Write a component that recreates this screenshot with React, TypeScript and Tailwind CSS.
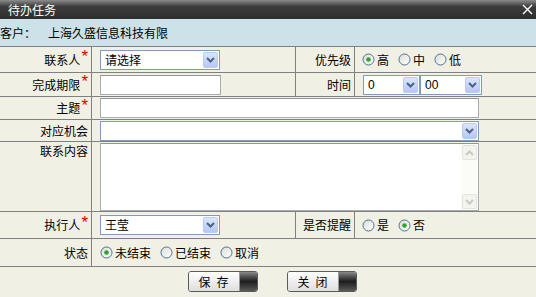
import React from 'react';

const Chevron = ({ color = '#4d6185' }: { color?: string }) => (
  <svg width="9" height="6" viewBox="0 0 9 6">
    <path d="M1 1l3.5 3.5L8 1" fill="none" stroke={color} strokeWidth="2" />
  </svg>
);

const Select = ({ value, className = '' }: { value?: string; className?: string }) => (
  <div className={`flex h-[20px] items-stretch border border-[#7f9db9] bg-white ${className}`}>
    <span className="flex-1 pl-[4px] leading-[18px]">{value}</span>
    <span className="m-px flex w-[15px] items-center justify-center rounded-[2px] border border-[#b9cbf3] bg-gradient-to-b from-[#dce6fd] to-[#b3c8f6]">
      <Chevron />
    </span>
  </div>
);

const Input = ({ className = '' }: { className?: string }) => (
  <div className={`h-[20px] border border-[#a5acb2] border-t-[#8e959b] bg-white ${className}`} />
);

const Radio = ({ checked }: { checked?: boolean }) => (
  <svg width="13" height="13" viewBox="0 0 13 13" className="shrink-0">
    <defs>
      <linearGradient id="rb" x1="0" y1="0" x2="1" y2="1">
        <stop offset="0" stopColor="#dcdcd6" />
        <stop offset="1" stopColor="#ffffff" />
      </linearGradient>
    </defs>
    <circle cx="6.5" cy="6.5" r="5.5" fill="url(#rb)" stroke="#4f6f93" />
    {checked && <circle cx="6.5" cy="6.5" r="2.3" fill="#2ea42e" />}
  </svg>
);

const RadioGroup = ({ items, checked }: { items: string[]; checked: number }) => (
  <div className="flex items-center gap-[9px]">
    {items.map((t, i) => (
      <span key={t} className="flex items-center gap-[2px]">
        <Radio checked={i === checked} />
        <span>{t}</span>
      </span>
    ))}
  </div>
);

const Star = () => (
  <span className="relative -top-[3px] ml-[1px] font-['Liberation_Sans',sans-serif] text-[17px] leading-none text-[#d80000]">*</span>
);

const Label = ({ text, req, top, w = 'w-[92px]' }: { text: string; req?: boolean; top?: boolean; w?: string }) => (
  <div className={`flex ${w} shrink-0 justify-end border-r border-[#808080] pr-[3px] ${top ? 'items-start pt-[2px]' : 'items-center'}`}>
    <span>{text}</span>
    {req && <Star />}
  </div>
);

const Btn = ({ chars }: { chars: string[] }) => (
  <div className="flex h-[21px] w-[70px] overflow-hidden rounded-[3px] border border-[#5a5a5a]">
    <div className="flex flex-1 items-center justify-center gap-[6px] bg-gradient-to-b from-white to-[#dedede]">
      {chars.map((c) => (
        <span key={c}>{c}</span>
      ))}
    </div>
    <div className="w-[18px] border-l border-[#999] bg-gradient-to-b from-[#8a8a8a] via-[#1e1e1e] to-[#5a5a5a]" />
  </div>
);

export default function App() {
  return (
    <div className="flex h-[297px] w-[536px] flex-col overflow-hidden bg-[#f1f0e5] font-['Noto_Sans_CJK_SC',sans-serif] text-[12px] leading-[14px] text-black">
      <div className="flex h-[19px] shrink-0 items-center justify-between bg-gradient-to-b from-[#8c8c8c] via-[#3c3c3c] via-35% to-[#2e2e2e] pl-[8px] pr-[3px] text-white">
        <span>待办任务</span>
        <svg width="11" height="11" viewBox="0 0 11 11">
          <path d="M1 1l9 9M10 1l-9 9" stroke="#fff" strokeWidth="1.4" />
        </svg>
      </div>
      <div className="flex h-[28px] shrink-0 items-center border-b border-[#808080] bg-[#cde1e8]">
        <span className="w-[48px]">客户：</span>
        <span>上海久盛信息科技有限</span>
      </div>

      <div className="flex h-[26px] shrink-0 border-b border-[#808080]">
        <Label text="联系人" req />
        <div className="flex w-[204px] items-center border-r border-[#808080] pl-[8px]">
          <Select value="请选择" className="w-[120px]" />
        </div>
        <Label text="优先级" w="w-[59px]" />
        <div className="flex flex-1 items-center pl-[7px]">
          <RadioGroup items={['高', '中', '低']} checked={0} />
        </div>
      </div>

      <div className="flex h-[24px] shrink-0 border-b border-[#808080]">
        <Label text="完成期限" req />
        <div className="flex w-[204px] items-center border-r border-[#808080] pl-[8px]">
          <Input className="w-[121px]" />
        </div>
        <Label text="时间" w="w-[59px]" />
        <div className="flex flex-1 items-center pl-[8px]">
          <Select value="0" className="w-[57px] font-['Liberation_Sans',sans-serif]" />
          <Select value="00" className="w-[62px] font-['Liberation_Sans',sans-serif]" />
        </div>
      </div>

      <div className="flex h-[23px] shrink-0 border-b border-[#808080]">
        <Label text="主题" req />
        <div className="flex flex-1 items-center pl-[8px]">
          <Input className="w-[379px]" />
        </div>
      </div>

      <div className="flex h-[22px] shrink-0 border-b border-[#808080]">
        <Label text="对应机会" />
        <div className="flex flex-1 items-center pl-[8px]">
          <Select className="w-[379px]" />
        </div>
      </div>

      <div className="flex h-[70px] shrink-0 border-b border-[#808080]">
        <Label text="联系内容" top />
        <div className="flex flex-1 items-start pl-[8px] pt-[1px]">
          <div className="flex h-[68px] w-[379px] border border-[#a5acb2] border-t-[#8e959b] bg-white">
            <div className="flex-1" />
            <div className="flex w-[17px] flex-col justify-between bg-[#fbfbf8] p-px">
              <span className="flex h-[15px] items-center justify-center rounded-[2px] border border-[#e4e4dc] bg-[#f4f4ef]">
                <svg width="9" height="6" viewBox="0 0 9 6">
                  <path d="M1 5l3.5-3.5L8 5" fill="none" stroke="#c9c9c2" strokeWidth="2" />
                </svg>
              </span>
              <span className="flex h-[15px] items-center justify-center rounded-[2px] border border-[#e4e4dc] bg-[#f4f4ef]">
                <Chevron color="#c9c9c2" />
              </span>
            </div>
          </div>
        </div>
      </div>

      <div className="flex h-[27px] shrink-0 border-b border-[#808080]">
        <Label text="执行人" req />
        <div className="flex w-[204px] items-center border-r border-[#808080] pl-[8px]">
          <Select value="王莹" className="w-[120px]" />
        </div>
        <Label text="是否提醒" w="w-[59px]" />
        <div className="flex flex-1 items-center pl-[7px]">
          <RadioGroup items={['是', '否']} checked={1} />
        </div>
      </div>

      <div className="flex h-[28px] shrink-0 border-b border-[#808080]">
        <Label text="状态" />
        <div className="flex flex-1 items-center pl-[8px]">
          <RadioGroup items={['未结束', '已结束', '取消']} checked={0} />
        </div>
      </div>

      <div className="flex justify-center gap-[29px] pl-[8px] pt-[4px]">
        <Btn chars={['保', '存']} />
        <Btn chars={['关', '闭']} />
      </div>
    </div>
  );
}
